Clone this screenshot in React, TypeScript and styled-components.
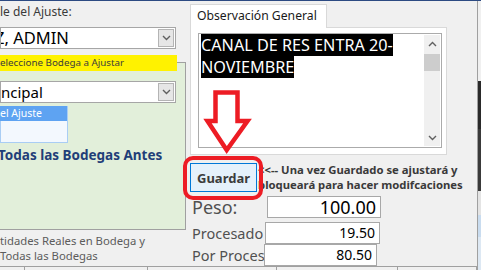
import React from "react";
import styled, { createGlobalStyle } from "styled-components";

const GlobalStyle = createGlobalStyle`
  html, body {
    margin: 0;
    padding: 0;
    background: #f0f0f0;
  }
  * {
    box-sizing: border-box;
  }
`;

const Screen = styled.div`
  position: relative;
  width: 481px;
  height: 270px;
  overflow: hidden;
  background: #f0f0f0;
  border-top: 1px solid #2c4a82;
  display: grid;
  grid-template-columns: 186px 291px 4px;
  grid-template-rows: 265px 4px;
  font-family: "Noto Sans", "Open Sans", sans-serif;
  color: #333;
`;

const LeftColumn = styled.div`
  grid-column: 1;
  grid-row: 1;
  display: flex;
  flex-direction: column;
  overflow: hidden;
`;

const FieldLabel = styled.div`
  margin-top: 3px;
  height: 16px;
  font-size: 12px;
  line-height: 16px;
  color: #3a3a3a;
  white-space: nowrap;
`;

const Combo = styled.div<{ $top: number }>`
  margin-top: ${(p) => p.$top}px;
  width: 176px;
  height: 22px;
  flex: none;
  display: flex;
  align-items: stretch;
  background: #fff;
  border: 1px solid #a6a6a6;
  overflow: hidden;
`;

const ComboText = styled.div<{ $shift?: number; $size?: number }>`
  flex: 1;
  margin-left: ${(p) => p.$shift ?? 0}px;
  font-size: ${(p) => p.$size ?? 16}px;
  line-height: 20px;
  color: #000;
  white-space: nowrap;
`;

const ComboButton = styled.div`
  width: 16px;
  margin: 1px;
  display: flex;
  align-items: center;
  justify-content: center;
  background: #e6e6e6;
  border: 1px solid #b4b4b4;
`;

const GreenPanel = styled.div`
  margin-top: 13px;
  width: 186px;
  height: 168px;
  flex: none;
  display: flex;
  flex-direction: column;
  background: #e2efda;
  border-top: 1px solid #a0a0a0;
  border-right: 1px solid #a0a0a0;
  border-bottom: 1px solid #a0a0a0;
`;

const YellowLabel = styled.div`
  margin-top: -8px;
  width: 177px;
  height: 16px;
  background: #fff200;
  font-size: 9.8px;
  line-height: 16px;
  color: #3c3c3c;
  white-space: nowrap;
  overflow: hidden;
`;

const ListBox = styled.div`
  margin-top: 3px;
  width: 68px;
  height: 37px;
  flex: none;
  background: #f3f8fe;
  border: 1px solid #a9cdf4;
  border-top: none;
`;

const ListItem = styled.div<{ $selected?: boolean }>`
  height: 15px;
  margin-left: -1px;
  background: ${(p) => (p.$selected ? "#5ea3f2" : "transparent")};
  color: ${(p) => (p.$selected ? "#fff" : "#000")};
  font-size: 10.5px;
  line-height: 15px;
  white-space: nowrap;
`;

const BoldNote = styled.div`
  margin-top: 3px;
  margin-left: -2px;
  font-size: 13.5px;
  line-height: 18px;
  font-weight: 700;
  color: #1f3e78;
  white-space: nowrap;
`;

const GrayNote = styled.div`
  margin-top: 3px;
  font-size: 11.3px;
  line-height: 15px;
  color: #5c5c5c;
  white-space: nowrap;
`;

const RightColumn = styled.div`
  grid-column: 2;
  grid-row: 1;
  display: flex;
  flex-direction: column;
  padding-left: 4px;
  overflow: hidden;
`;

const Tab = styled.div`
  margin-top: 3px;
  width: 137px;
  height: 24px;
  flex: none;
  background: #fff;
  border: 1px solid #d9d9d9;
  border-bottom: none;
  font-size: 12.2px;
  line-height: 22px;
  padding-left: 6px;
  color: #1a1a1a;
  white-space: nowrap;
  position: relative;
  z-index: 1;
  margin-bottom: -1px;
`;

const TabPage = styled.div`
  width: 257px;
  height: 128px;
  flex: none;
  background: #fff;
  border: 1px solid #d9d9d9;
  padding: 5px 4px 0 7px;
`;

const TextArea = styled.div`
  height: 115px;
  display: flex;
  border: 1px solid #ababab;
  background: #fff;
`;

const TextBody = styled.div`
  flex: 1;
  padding: 1px 0 0 2px;
  font-size: 16.2px;
  line-height: 21.5px;
`;

const Highlight = styled.span`
  background: #000;
  color: #fff;
  white-space: nowrap;
`;

const ScrollBar = styled.div`
  width: 16px;
  margin: 1px 1px 1px 0;
  display: flex;
  flex-direction: column;
  background: #f0f0f0;
`;

const ScrollArrow = styled.div`
  height: 17px;
  display: flex;
  align-items: center;
  justify-content: center;
`;

const ScrollThumb = styled.div`
  height: 17px;
  margin-top: 2px;
  background: #cdcdcd;
`;

const ScrollTrack = styled.div`
  flex: 1;
`;

const SaveRow = styled.div`
  margin-top: 7px;
  display: flex;
  align-items: flex-start;
  gap: 1px;
`;

const SaveButton = styled.div`
  width: 67px;
  height: 29px;
  flex: none;
  margin-top: 1px;
  display: flex;
  align-items: center;
  justify-content: center;
  background: #e5f1fb;
  border: 1px solid #0078d7;
  font-size: 13px;
  font-weight: 700;
  color: #3c3c3c;
`;

const SaveHint = styled.div`
  font-size: 11.3px;
  line-height: 15px;
  font-weight: 700;
  color: #3a3a3a;
  white-space: nowrap;
`;

const ValueRow = styled.div<{ $top: number }>`
  margin-top: ${(p) => p.$top}px;
  display: flex;
  align-items: center;
  height: 22px;
  flex: none;
`;

const ValueLabel = styled.div<{ $size: number; $width: number }>`
  width: ${(p) => p.$width}px;
  flex: none;
  padding-left: 2px;
  font-size: ${(p) => p.$size}px;
  color: #505050;
  white-space: nowrap;
  overflow: hidden;
`;

const ValueInput = styled.div<{ $width: number; $size: number }>`
  width: ${(p) => p.$width}px;
  height: 22px;
  flex: none;
  background: #fff;
  border: 1px solid #a8a8a8;
  text-align: right;
  padding-right: 4px;
  font-size: ${(p) => p.$size}px;
  line-height: 20px;
  color: #000;
`;

const EdgeStrip = styled.div`
  grid-column: 3;
  grid-row: 1 / span 2;
  border-left: 1px solid #a0a0a0;
  background: linear-gradient(
    to bottom,
    #f0f0f0 0px,
    #f0f0f0 80px,
    #2a2a2a 80px,
    #2a2a2a 128px,
    #3a3a3a 128px,
    #3a3a3a 190px,
    #e4e4e4 190px,
    #e4e4e4 214px,
    #c9dcef 214px,
    #c9dcef 236px,
    #dde8f3 236px
  );
`;

const TableHead = styled.div`
  grid-column: 1 / span 2;
  grid-row: 2;
  display: grid;
  grid-template-columns: 25px 123px 129px 121px 1fr;
  border-top: 1px solid #a0a0a0;
`;

const HeadCell = styled.div`
  border-right: 1px solid #a0a0a0;
  background: #f0f0f0;
`;

const ArrowMark = styled.svg`
  position: absolute;
  left: 200px;
  top: 85px;
`;

const CircleMark = styled.div`
  position: absolute;
  left: 183px;
  top: 155px;
  width: 80px;
  height: 44px;
  border: 4px solid #ed1c24;
  border-radius: 10px;
`;

const Chevron = ({ up }: { up?: boolean }) => (
  <svg width="9" height="6" viewBox="0 0 9 6">
    <path
      d={up ? "M1 5 L4.5 1.5 L8 5" : "M1 1 L4.5 4.5 L8 1"}
      fill="none"
      stroke="#606060"
      strokeWidth="1.4"
    />
  </svg>
);

export default function App() {
  return (
    <>
      <GlobalStyle />
      <Screen>
        <LeftColumn>
          <FieldLabel>le del Ajuste:</FieldLabel>
          <Combo $top={7}>
            <ComboText $shift={-6} $size={16.5}>
              Z, ADMIN
            </ComboText>
            <ComboButton>
              <Chevron />
            </ComboButton>
          </Combo>
          <GreenPanel>
            <YellowLabel>eleccione Bodega a Ajustar</YellowLabel>
            <Combo $top={10}>
              <ComboText $size={15}>ncipal</ComboText>
              <ComboButton>
                <Chevron />
              </ComboButton>
            </Combo>
            <ListBox>
              <ListItem $selected>el Ajuste</ListItem>
            </ListBox>
            <BoldNote>Todas las Bodegas Antes</BoldNote>
          </GreenPanel>
          <GrayNote>
            tidades Reales en Bodega y
            <br />
            Todas las Bodegas
          </GrayNote>
        </LeftColumn>

        <RightColumn>
          <Tab>Observación General</Tab>
          <TabPage>
            <TextArea>
              <TextBody>
                <Highlight>CANAL DE RES ENTRA 20-</Highlight>
                <br />
                <Highlight>NOVIEMBRE</Highlight>
              </TextBody>
              <ScrollBar>
                <ScrollArrow>
                  <Chevron up />
                </ScrollArrow>
                <ScrollThumb />
                <ScrollTrack />
                <ScrollArrow>
                  <Chevron />
                </ScrollArrow>
              </ScrollBar>
            </TextArea>
          </TabPage>
          <SaveRow>
            <SaveButton>Guardar</SaveButton>
            <SaveHint>
              &lt;&lt;-- Una vez Guardado se ajustará y
              <br />
              bloqueará para hacer modifcaciones
            </SaveHint>
          </SaveRow>
          <ValueRow $top={4}>
            <ValueLabel $size={18} $width={77}>
              Peso:
            </ValueLabel>
            <ValueInput $width={114} $size={18}>
              100.00
            </ValueInput>
          </ValueRow>
          <ValueRow $top={4}>
            <ValueLabel $size={14.5} $width={75}>
              Procesado
            </ValueLabel>
            <ValueInput $width={115} $size={14}>
              19.50
            </ValueInput>
          </ValueRow>
          <ValueRow $top={0}>
            <ValueLabel $size={14.5} $width={74}>
              Por Procesar
            </ValueLabel>
            <ValueInput $width={113} $size={14}>
              80.50
            </ValueInput>
          </ValueRow>
        </RightColumn>

        <EdgeStrip />

        <TableHead>
          <HeadCell />
          <HeadCell />
          <HeadCell />
          <HeadCell />
          <HeadCell />
        </TableHead>

        <ArrowMark width="55" height="70" viewBox="0 0 55 70">
          <polygon
            points="15.5,6.5 37.5,6.5 37.5,35 47.5,35 26.7,64 7.5,35 15.5,35"
            fill="none"
            stroke="#ed1c24"
            strokeWidth="4.5"
          />
        </ArrowMark>
        <CircleMark />
      </Screen>
    </>
  );
}
